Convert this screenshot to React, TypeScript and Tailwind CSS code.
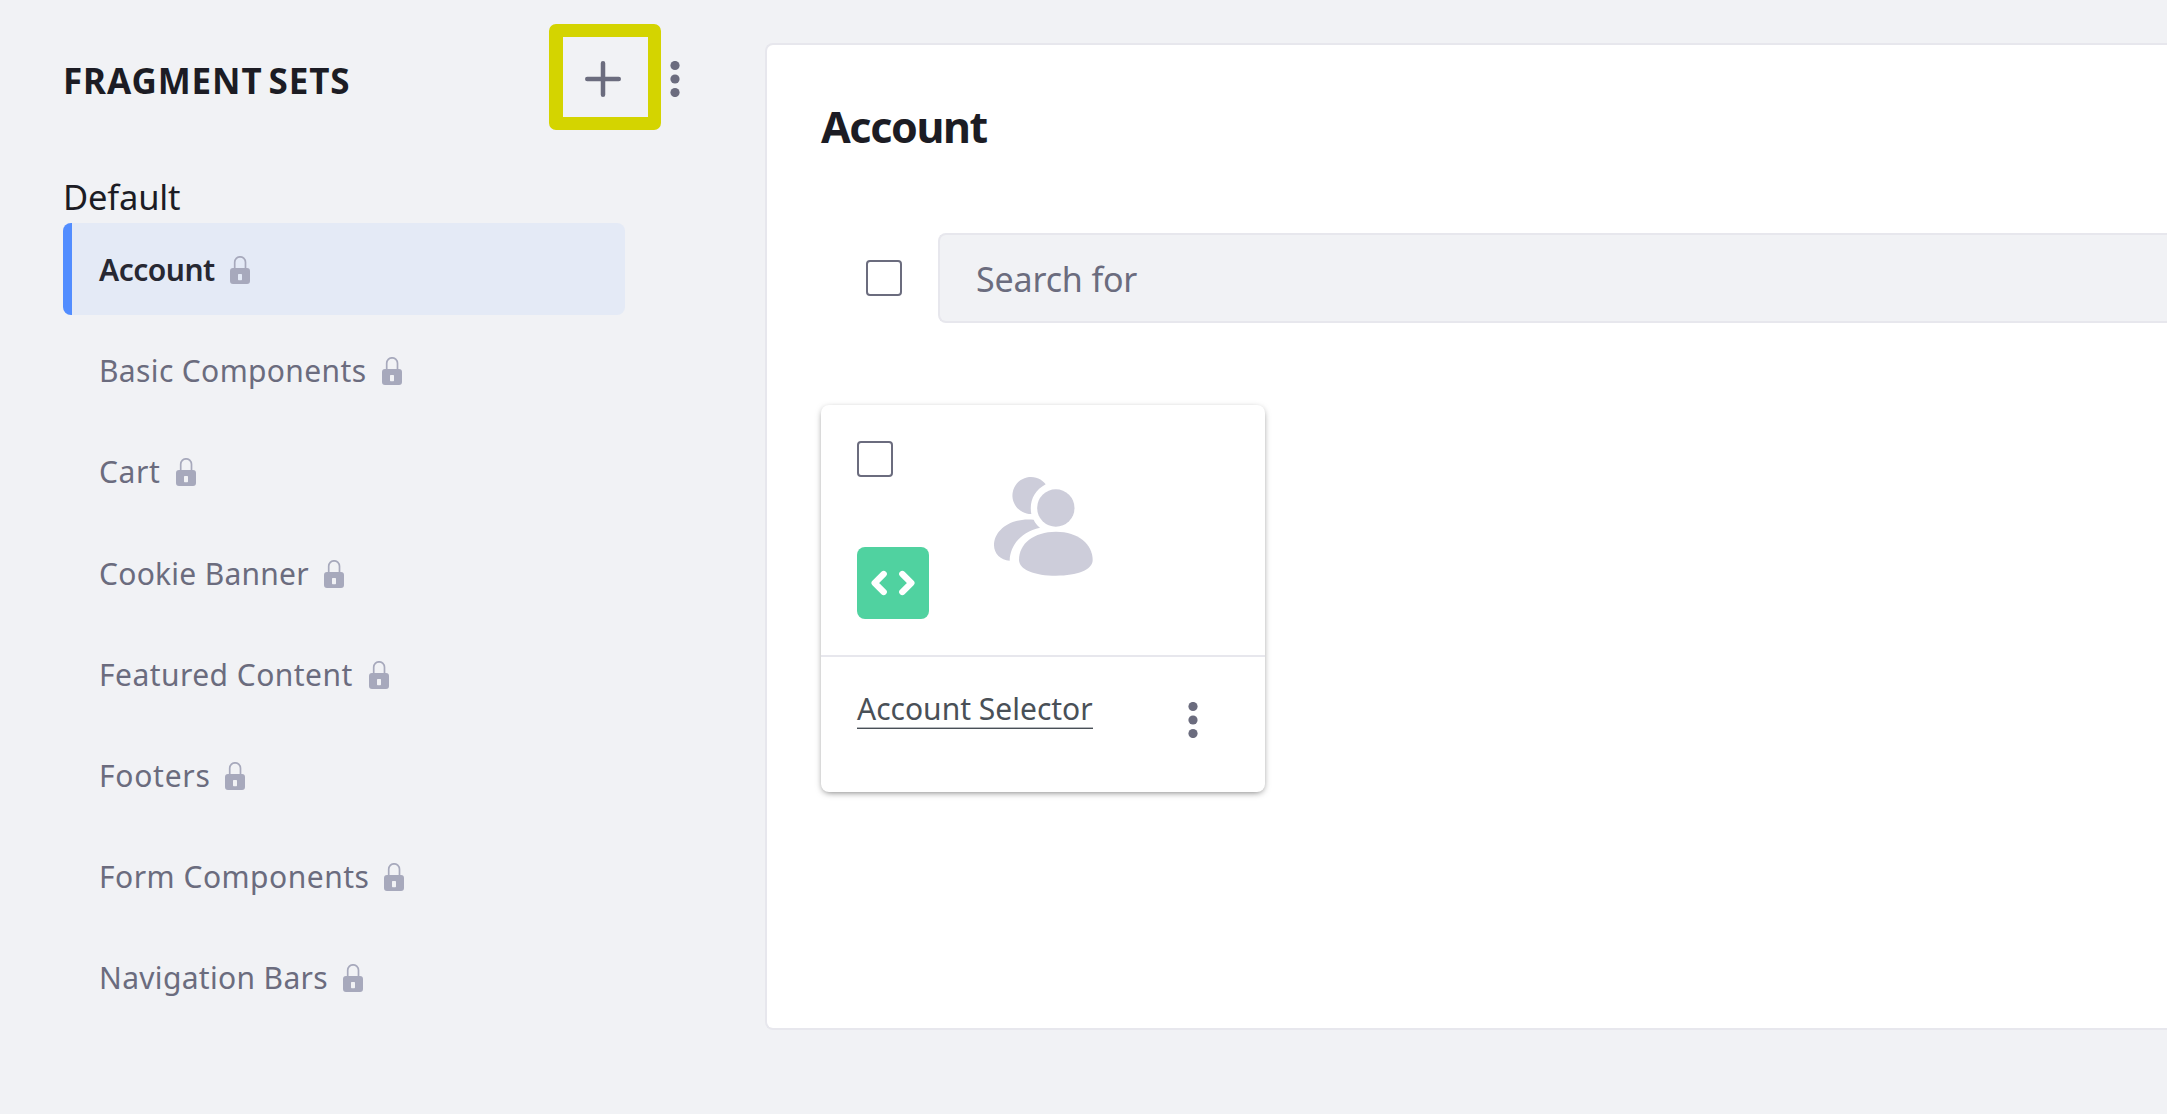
const NAV_ITEMS = [
  { label: 'Account', tracking: 'tracking-[-0.5px]', gap: 'gap-[15.5px]', active: true },
  { label: 'Basic Components', tracking: 'tracking-[0.36px]', gap: 'gap-[15.8px]' },
  { label: 'Cart', tracking: 'tracking-[0.6px]', gap: 'gap-[15.4px]' },
  { label: 'Cookie Banner', tracking: 'tracking-[0.27px]', gap: 'gap-[15px]' },
  { label: 'Featured Content', tracking: 'tracking-[0.46px]', gap: 'gap-[15.9px]' },
  { label: 'Footers', tracking: 'tracking-[0.75px]', gap: 'gap-[14.5px]' },
  { label: 'Form Components', tracking: 'tracking-[0.5px]', gap: 'gap-[14.6px]' },
  { label: 'Navigation Bars', tracking: 'tracking-[0.33px]', gap: 'gap-[14.7px]' },
];

function LockIcon() {
  return (
    <svg className="h-7 w-5 shrink-0 text-[#a7a9bc]" viewBox="0 0 20 28" fill="none">
      <path d="M4.7 13V6.2a5.4 5.4 0 0 1 10.8 0V13" stroke="currentColor" strokeWidth="1.7" />
      <path
        fillRule="evenodd"
        fill="currentColor"
        d="M3 12h14a3 3 0 0 1 3 3v10a3 3 0 0 1-3 3H3a3 3 0 0 1-3-3V15a3 3 0 0 1 3-3Zm5.7 6a.7.7 0 0 0-.7.7v4.9a.7.7 0 0 0 .7.7h2.6a.7.7 0 0 0 .7-.7v-4.900a.7.7 0 0 0-.7-.7Z"
      />
    </svg>
  );
}

function PlusIcon() {
  return (
    <svg className="size-9 text-[#6b6c7e]" viewBox="0 0 36 36" fill="none">
      <path d="M18 2.250v31.500M2.250 18h31.500" stroke="currentColor" strokeWidth="4.500" strokeLinecap="round" />
    </svg>
  );
}

function KebabIcon() {
  return (
    <svg className="h-9 w-[10px] text-[#6b6c7e]" viewBox="0 0 10 36" fill="currentColor">
      <circle cx="5" cy="4.500" r="4.600" />
      <circle cx="5" cy="18" r="4.600" />
      <circle cx="5" cy="31.500" r="4.600" />
    </svg>
  );
}

function UsersIcon() {
  return (
    <svg className="size-[99px] text-[#cdcdda]" viewBox="0 0 297 297" fill="currentColor">
      <circle cx="185.500" cy="93" r="56" />
      <path d="M155 22A55.500 55.500 0 1 0 112 111C105 74 120 41 155 22Z" />
      <path d="M75 248C75 200 119 164 186 164C253 164 296 202 296 249C296 278 250 296 186 296C122 296 75 278 75 248Z" />
      <path d="M119 128C50 121 0 160 0 205C0 230 20 250 47 251C48 206 82 163 138 152C129 145 123 137 119 128Z" />
    </svg>
  );
}

function CodeIcon() {
  return (
    <svg
      className="h-[26px] w-11"
      viewBox="0 0 132 78"
      fill="none"
      stroke="white"
      strokeWidth="19"
      strokeLinecap="round"
      strokeLinejoin="round"
    >
      <path d="M38 12 11 39l27 27M94 12l27 27-27 27" />
    </svg>
  );
}

function Checkbox() {
  return <span className="size-9 shrink-0 rounded-[4px] border-2 border-[#6b6c7e] bg-white" />;
}

function Sidebar() {
  return (
    <aside className="w-[765px] shrink-0 pt-6 pl-[63px]">
      <header className="flex h-[106px] items-center">
        <h2 className="w-[486px] pt-[6px] text-[35px] leading-none font-bold tracking-[0.9px] whitespace-nowrap text-[#1c1c24] [word-spacing:-4px]">
          FRAGMENT SETS
        </h2>
        <button className="flex h-[106px] w-28 items-center justify-center rounded-[7px] border-[13px] border-l-[14px] border-[#d4d400] pt-[4px] pr-[5px]">
          <PlusIcon />
        </button>
        <button className="ml-[9px] pt-[4px]">
          <KebabIcon />
        </button>
      </header>
      <p className="mt-[41px] text-[34.5px] leading-[52px] tracking-[-0.18px] text-[#1c1c24]">Default</p>
      <ul className="flex w-[562px] flex-col gap-[9.2px]">
        {NAV_ITEMS.map((item) => (
          <li
            key={item.label}
            className={
              item.active
                ? 'flex h-[92px] overflow-hidden rounded-lg bg-[#e4eaf6] font-semibold text-[#272833]'
                : 'flex h-[92px] text-[#6b6c7e]'
            }
          >
            <span className={item.active ? 'w-[9px] bg-[#528dff]' : 'w-[9px]'} />
            <a className={`flex items-center pt-[2px] pl-[27px] text-[30px] leading-[90px] whitespace-nowrap ${item.gap}`}>
              <span className={item.tracking}>{item.label}</span>
              <LockIcon />
            </a>
          </li>
        ))}
      </ul>
    </aside>
  );
}

function FragmentCard() {
  return (
    <article className="mt-[81.500px] h-[387px] w-[444px] rounded-lg bg-white shadow-[0_2px_7px_-2px_rgba(0,0,0,0.6)]">
      <div className="relative flex h-[252px] flex-col items-start justify-between border-b-2 border-[#e7e7ed] p-9">
        <Checkbox />
        <span className="flex size-[72px] items-center justify-center rounded-lg bg-[#50d2a0]">
          <CodeIcon />
        </span>
        <div className="absolute inset-0 flex items-center justify-center pb-[6px]">
          <UsersIcon />
        </div>
      </div>
      <div className="flex items-start justify-between pt-[33px] pr-[67px] pl-9">
        <a className="border-b border-[#495057] text-[30px] leading-[38px] whitespace-nowrap text-[#495057] shadow-[inset_0_-1px_#b4b7bb]">
          Account Selector
        </a>
        <button className="pt-[12px]">
          <KebabIcon />
        </button>
      </div>
    </article>
  );
}

export default function App() {
  return (
    <div className="flex h-[1114px] w-full overflow-hidden bg-[#f1f2f5] font-['Noto_Sans',sans-serif]">
      <Sidebar />
      <main className="mt-[43px] h-[987px] flex-1 rounded-l-lg border-2 border-r-0 border-[#e7e7ed] bg-white pt-[52px] pl-[54px]">
        <h1 className="text-[43px] leading-[60px] font-bold tracking-[-1.4px] text-[#1c1c24]">Account</h1>
        <div className="mt-[76px] flex items-center gap-9 pl-[45px]">
          <Checkbox />
          <div className="h-[90px] flex-1 rounded-l-lg border-2 border-r-0 border-[#e7e7ed] bg-[#f1f2f5] pl-9 text-[34px] leading-[88px] tracking-[-0.15px] text-[#6b6c7e]">
            Search for
          </div>
        </div>
        <FragmentCard />
      </main>
    </div>
  );
}
